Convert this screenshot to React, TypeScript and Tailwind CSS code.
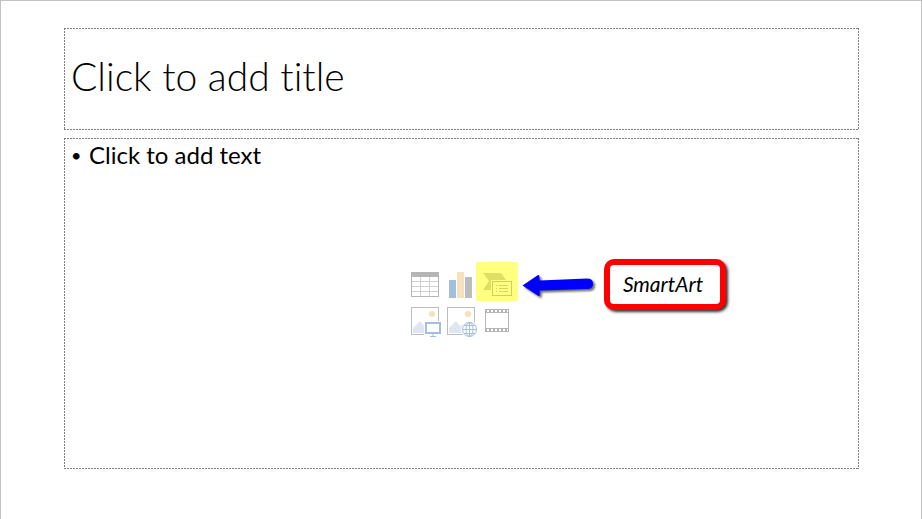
import React from 'react';

const TableIcon = () => (
  <svg viewBox="0 0 36 36" className="h-9 w-9" shapeRendering="crispEdges">
    <rect x="4" y="5" width="28" height="25" fill="#b5b5b5" />
    <rect x="5" y="10" width="26" height="19" fill="#fff" />
    <path d="M13.5 10v19M22.5 10v19M5 14.5h26M5 19.5h26M5 24.5h26" stroke="#d0d0d0" fill="none" />
  </svg>
);

const ChartIcon = () => (
  <svg viewBox="0 0 36 36" className="h-9 w-9" shapeRendering="crispEdges">
    <rect x="6" y="13" width="7" height="18" fill="#a3bfdc" />
    <rect x="14" y="5" width="7" height="26" fill="#f4e1bd" />
    <rect x="22" y="10" width="7" height="21" fill="#bdbdbd" />
  </svg>
);

const SmartArtIcon = () => (
  <svg viewBox="0 0 36 36" className="relative h-9 w-9">
    <path d="M4 6h18l6 8v9H4l6-9z" fill="#dfdf64" />
    <rect x="12" y="13" width="22" height="18" fill="#ffff80" />
    <rect x="13.5" y="14.5" width="19" height="14" fill="#ffff80" stroke="#cfcf62" />
    <path
      d="M17 18.5h1M20 18.5h9M17 21.5h1M20 21.5h9M17 24.5h1M20 24.5h9"
      stroke="#d6d666"
      fill="none"
    />
  </svg>
);

const PictureFrame = () => (
  <>
    <rect x="4.5" y="4.5" width="27" height="27" fill="#fff" stroke="#bdbdbd" />
    <circle cx="25" cy="11" r="3" fill="#f4e1bd" />
    <path d="M6 30v-5l7-7 4 5 3-2 6 9z" fill="#dee6f1" />
  </>
);

const PictureIcon = () => (
  <svg viewBox="0 0 36 36" className="h-9 w-9">
    <PictureFrame />
    <rect x="17" y="18" width="19" height="16" fill="#fff" />
    <rect x="19" y="20" width="14" height="10" fill="#fff" stroke="#a3bfdc" strokeWidth="2" />
    <path d="M26 31v2M23 33.5h6" stroke="#a3bfdc" fill="none" />
  </svg>
);

const OnlinePictureIcon = () => (
  <svg viewBox="0 0 36 36" className="h-9 w-9">
    <PictureFrame />
    <circle cx="26.5" cy="26.5" r="8.5" fill="#fff" />
    <g stroke="#a3bfdc" fill="none">
      <circle cx="26.5" cy="26.5" r="7" />
      <ellipse cx="26.5" cy="26.5" rx="3.5" ry="7" />
      <path d="M26.5 19.5v14M19.5 26.5h14M21 22.5h11M21 30.5h11" />
    </g>
  </svg>
);

const VideoIcon = () => (
  <svg viewBox="0 0 36 36" className="h-9 w-9" shapeRendering="crispEdges">
    <rect x="6" y="6" width="24" height="23" fill="#b5b5b5" />
    <rect x="7" y="10" width="22" height="15" fill="#fff" />
    <path d="M8 8h21M8 27h21" stroke="#fff" strokeWidth="2" strokeDasharray="2 2" fill="none" />
  </svg>
);

const Arrow = () => (
  <svg
    viewBox="0 0 72 24"
    className="absolute top-[7px] left-[43px] h-6 w-[72px] drop-shadow-[2px_2px_1px_rgba(0,0,0,0.6)]"
  >
    <path
      d="M0.500 11.500L16 1Q18 0.500 17.500 6.500L65 4.500Q71 4.500 71 9.500Q71 15 65 15L17.500 16.500Q18.500 22.500 16.500 22z"
      fill="#0000ff"
    />
  </svg>
);

const Placeholder = ({ className, children }: { className: string; children: React.ReactNode }) => (
  <section
    className={`bg-[repeating-linear-gradient(90deg,#7f7f7f_0_2px,transparent_2px_3px),repeating-linear-gradient(90deg,#7f7f7f_0_2px,transparent_2px_3px),repeating-linear-gradient(180deg,#7f7f7f_0_2px,transparent_2px_3px),repeating-linear-gradient(180deg,#7f7f7f_0_2px,transparent_2px_3px)] bg-[length:100%_1px,100%_1px,1px_100%,1px_100%] bg-[position:top,bottom,left,right] bg-no-repeat ${className}`}
  >
    {children}
  </section>
);

export default function App() {
  return (
    <main className="flex min-h-screen flex-col gap-2 border-x border-t border-[#c3c3c3] bg-white pt-[27px] pr-[62px] pb-[50px] pl-[63px] font-['Lato',sans-serif] text-black [font-variant-ligatures:none]">
      <Placeholder className="flex min-h-[102px] items-center px-[7px] pb-1.5">
        <h1 className="text-[39px] leading-[48px] font-light">Click to add title</h1>
      </Placeholder>

      <Placeholder className="grid flex-1 pr-2 pb-0.5 pl-[7px]">
        <ul className="col-start-1 row-start-1 self-start">
          <li className="flex items-center text-2xl leading-[34px]">
            <span className="w-[18px] text-lg leading-[34px]">•</span>
            Click to add text
          </li>
        </ul>

        <div className="col-start-1 row-start-1 grid grid-cols-3 place-self-center">
          <button aria-label="Insert Table">
            <TableIcon />
          </button>
          <button aria-label="Insert Chart">
            <ChartIcon />
          </button>
          <div className="relative">
            <div className="absolute -top-[5px] -left-[3px] h-[39px] w-[42px] bg-[#ffff80]" />
            <button aria-label="Insert a SmartArt Graphic" className="block">
              <SmartArtIcon />
            </button>
            <Arrow />
            <div className="absolute -top-2 left-[125px] flex h-[51px] w-[122px] items-center justify-center rounded-[10px] border-6 border-[#ff0000] bg-white pr-1 text-[21px] text-black italic shadow-[2px_2px_3px_rgba(0,0,0,0.8)]">
              SmartArt
            </div>
          </div>
          <button aria-label="Pictures">
            <PictureIcon />
          </button>
          <button aria-label="Online Pictures">
            <OnlinePictureIcon />
          </button>
          <button aria-label="Insert Video">
            <VideoIcon />
          </button>
        </div>
      </Placeholder>
    </main>
  );
}
